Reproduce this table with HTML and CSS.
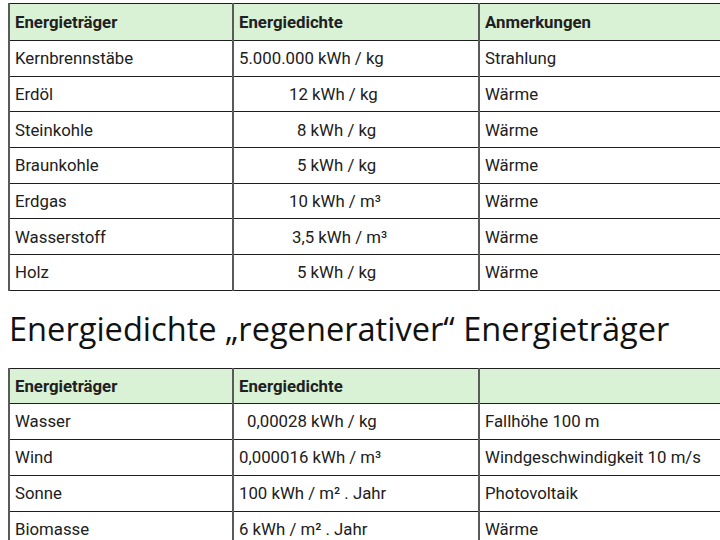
FILE: index.html
```html
<!DOCTYPE html>
<html lang="de">
<head>
<meta charset="utf-8">
<link rel="stylesheet" href="styles.css">
</head>
<body>
<main class="page">
  <table class="grid">
    <colgroup><col class="c1"><col class="c2"><col class="c3"></colgroup>
    <thead>
      <tr><th>Energieträger</th><th>Energiedichte</th><th>Anmerkungen</th></tr>
    </thead>
    <tbody>
      <tr><td>Kernbrennstäbe</td><td class="v0">5.000.000 kWh / kg</td><td>Strahlung</td></tr>
      <tr><td>Erdöl</td><td class="v2">12 kWh / kg</td><td>Wärme</td></tr>
      <tr><td>Steinkohle</td><td class="v3">8 kWh / kg</td><td>Wärme</td></tr>
      <tr><td>Braunkohle</td><td class="v3">5 kWh / kg</td><td>Wärme</td></tr>
      <tr><td>Erdgas</td><td class="v2">10 kWh / m³</td><td>Wärme</td></tr>
      <tr><td>Wasserstoff</td><td class="v25">3,5 kWh / m³</td><td>Wärme</td></tr>
      <tr><td>Holz</td><td class="v3">5 kWh / kg</td><td>Wärme</td></tr>
    </tbody>
  </table>

  <h1 class="title">Energiedichte „regenerativer“ Energieträger</h1>

  <table class="grid grid-tall">
    <colgroup><col class="c1"><col class="c2"><col class="c3"></colgroup>
    <thead>
      <tr><th>Energieträger</th><th>Energiedichte</th><th></th></tr>
    </thead>
    <tbody>
      <tr><td>Wasser</td><td class="v1">0,00028 kWh / kg</td><td>Fallhöhe 100 m</td></tr>
      <tr><td>Wind</td><td class="v0">0,000016 kWh / m³</td><td>Windgeschwindigkeit 10 m/s</td></tr>
      <tr><td>Sonne</td><td class="v0">100 kWh / m² . Jahr</td><td>Photovoltaik</td></tr>
      <tr><td>Biomasse</td><td class="v0">6 kWh / m² . Jahr</td><td>Wärme</td></tr>
    </tbody>
  </table>
</main>
</body>
</html>
```
FILE: styles.css
```css
html, body {
  margin: 0;
  padding: 0;
  background: #ffffff;
  overflow: hidden;
}

.page {
  width: 720px;
  height: 540px;
  overflow: hidden;
  padding: 3px 0 0 8px;
  box-sizing: border-box;
  font-family: Roboto, "Liberation Sans", sans-serif;
  color: #202020;
}

.grid {
  border-collapse: collapse;
  table-layout: fixed;
  width: 780px;
  font-size: 16.8px;
}

.c1 { width: 224px; }
.c2 { width: 246px; }
.c3 { width: 310px; }

.grid th,
.grid td {
  border: 1px solid #1e1e1e;
  border-left: 2px solid #5a5a5a;
  border-right: 2px solid #5a5a5a;
  height: 35.7px;
  padding: 0 5px;
  text-align: left;
  white-space: nowrap;
  box-sizing: border-box;
}

.grid th {
  background: #d9f1d5;
  font-weight: 700;
  height: 37px;
}

.grid-tall th {
  height: 35px;
}

.grid-tall td {
  height: 36px;
}

.grid td.v0 { padding-left: 5px; }
.grid td.v1 { padding-left: 13px; }
.grid td.v25 { padding-left: 58px; }
.grid td.v2 { padding-left: 55px; }
.grid td.v3 { padding-left: 63px; }

.title {
  margin: 0;
  height: 77px;
  padding: 18px 0 0 1px;
  box-sizing: border-box;
  font-family: "Open Sans", "Noto Sans", sans-serif;
  font-weight: 400;
  font-size: 32.6px;
  line-height: 40px;
  color: #111111;
  white-space: nowrap;
}
```
